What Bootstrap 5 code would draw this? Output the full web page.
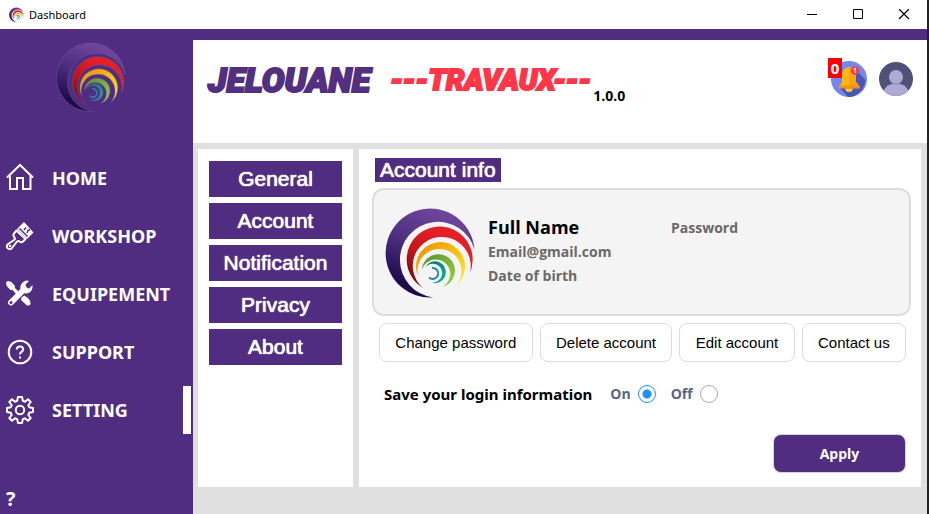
<!DOCTYPE html>
<html lang="en">
<head>
<meta charset="utf-8">
<meta name="viewport" content="width=device-width, initial-scale=1">
<title>Dashboard</title>
<link rel="stylesheet" href="https://cdn.jsdelivr.net/npm/bootstrap@5.3.0/dist/css/bootstrap.min.css">
<style>
:root{--brand:#512d82;--panel-gap:#e0e0e0}
body{font-family:"Open Sans","Noto Sans",sans-serif;background:#fff;border-right:2px solid #222;color:#000}
.title-bar{height:29px;padding-left:9px;gap:5px;font-family:"Noto Sans",sans-serif;font-size:11px;line-height:16px}
.title-bar .app-icon{width:15px;height:15px}
.win-btn{width:46px;height:29px;background:none;border:0;padding:0;display:grid;place-items:center}
.side{width:193px;background:var(--brand);padding:12px 0 3px}
.side .brand-logo{width:71px;height:71px;margin-left:56px}
.side-menu{margin-top:37px}
.side-link{height:58px;padding:0 2px 0 5px;gap:17px;color:#fff;text-decoration:none;font-family:"Noto Sans","Open Sans",sans-serif;font-size:18px;line-height:24px;font-weight:700}
.side-link svg{width:30px;height:30px;flex:none}
.side-link .active-bar{width:8px;height:48px;background:#fff}
.side-help{padding-left:6px;font-size:20px;line-height:24px;font-weight:700;color:#fff;text-decoration:none}
.work{border-top:11px solid var(--brand);background:var(--panel-gap)}
.top-head{background:#fff;height:103px;padding:17px 14px 0 15px}
.word-main,.word-sub{font-family:Roboto,"Liberation Sans",sans-serif;font-weight:900;font-style:italic;line-height:46px}
.word-main{color:#53307f;font-size:34px;-webkit-text-stroke:2px #53307f}
.word-sub{color:#ff3648;font-size:29px;margin-left:20px;-webkit-text-stroke:2px #ff3648}
.version{font-size:14px;line-height:20px;font-weight:700;margin:29px 0 0 2px}
.head-btn{border:0;background:none;padding:0;position:relative;line-height:0}
.count{position:absolute;left:-3px;top:-3px;width:14px;height:20px;background:#f00;color:#fff;font-size:15px;line-height:20px;font-weight:700;text-align:center}
.panels{padding:6px 6px 27px 5px;gap:6px}
.tabs-col{width:155px;background:#fff;padding:12px 11px;gap:6px}
.arial{font-family:"Liberation Sans",Arial,sans-serif}
.tab-btn{background:var(--brand);color:#fff;border:0;height:36px;font-size:21px;line-height:24px;padding:0;text-shadow:0 0 1px #fff,0 0 1px #fff}
.info-col{background:#fff;padding:9px 10px 14px 13px}
.info-title{background:var(--brand);color:#fff;font-size:21px;line-height:24px;font-weight:400;margin:0 3px 6px;padding:0 5px;text-shadow:0 0 1px #fff,0 0 1px #fff}
.profile{background:#f4f4f4;border:2px solid #dcdcdc;border-radius:12px;height:128px;padding:0 11px}
.profile .user-logo{width:92px;height:92px}
.user-name{font-size:18px;line-height:26px;font-weight:700;margin:0}
.user-line{font-size:14px;line-height:24px;font-weight:700;color:#6b6868}
.user-cols{padding-left:11px;margin-top:-2px}
.user-cols .data-col{width:183px}
.user-cols .pass-col{padding-top:2px}
.actions{gap:7px;margin-top:7px;padding:0 5px 0 7px}
.action-btn{background:#fff;border:1px solid #dcdcdc;border-radius:8px;height:39px;font-size:15px;line-height:20px;color:#000;padding:0}
.save-row{margin:20px 0 0 12px;font-size:15px;line-height:24px;font-weight:700}
.save-row fieldset{display:contents}
.save-row legend{font-family:"Noto Sans","Open Sans",sans-serif;font-size:15px;line-height:24px;font-weight:700;width:auto;margin:0 18px 0 0;float:none}
.save-row label{color:#5a6585;margin-right:7px;font-size:14px}
.save-row input{appearance:none;width:18px;height:18px;margin:0 15px 0 0;border:1px solid #a9a9a9;border-radius:50%;background:#fff}
.save-row input:checked{border-color:#1e90ff;background:radial-gradient(circle,#1e90ff 0 4px,#fff 5px)}
.apply-btn{background:var(--brand);color:#fff;border:1px solid #d8d4e0;border-radius:8px;width:133px;height:39px;font-size:14px;line-height:20px;font-weight:700;margin-right:5px;padding:0}
</style>
<script src="https://cdn.jsdelivr.net/npm/bootstrap@5.3.0/dist/js/bootstrap.bundle.min.js"></script>
</head>
<body class="min-vh-100 d-flex flex-column">
<svg width="0" height="0" class="position-absolute" aria-hidden="true">
  <defs>
    <linearGradient id="gPurple" x1="0.7" y1="0" x2="0.3" y2="1"><stop offset="0.1" stop-color="#6c4499"/><stop offset="0.5" stop-color="#4a2c7c"/><stop offset="0.9" stop-color="#1f0a4c"/></linearGradient>
    <linearGradient id="gRed" x1="0.8" y1="0.1" x2="0.1" y2="1"><stop offset="0.2" stop-color="#e41f26"/><stop offset="0.6" stop-color="#c01418"/><stop offset="1" stop-color="#6c0a0c"/></linearGradient>
    <linearGradient id="gYellow" x1="0" y1="0" x2="1" y2="1"><stop offset="0.2" stop-color="#eea00c"/><stop offset="0.9" stop-color="#ffe61a"/></linearGradient>
    <linearGradient id="gGreen" x1="0" y1="0" x2="1" y2="1"><stop offset="0.1" stop-color="#5d9a2e"/><stop offset="1" stop-color="#9bcf45"/></linearGradient>
    <linearGradient id="gTeal" x1="0" y1="0" x2="1" y2="1"><stop offset="0.1" stop-color="#0c7560"/><stop offset="1" stop-color="#12b5a2"/></linearGradient>
    <symbol id="swirl" viewBox="5 6.500 92 92">
      <path fill="url(#gPurple)" d="M53 98A44.500 44.500 0 1 1 94.500 50A38 38 0 1 0 53 98Z"/>
      <path fill="url(#gRed)" d="M43 88.500A33 33 0 1 1 90 73A29 29 0 1 0 43 88.500Z"/>
      <path fill="url(#gYellow)" d="M38.500 78A24.500 24.500 0 1 1 76 86A22 22 0 1 0 38.500 78Z"/>
      <path fill="url(#gGreen)" d="M42 70A16.500 16.500 0 1 1 63 87A14.500 14.500 0 1 0 42 70Z"/>
      <path fill="url(#gTeal)" d="M45 68A11 11 0 1 1 51 83A9.500 9.500 0 1 0 45 68Z"/>
      <path fill="none" stroke="#2a86b8" stroke-width="2" d="M52 68.500A5.500 5.500 0 1 1 49 78"/>
    </symbol>
  </defs>
</svg>

<header class="title-bar d-flex align-items-center">
  <svg class="app-icon" aria-hidden="true"><use href="#swirl"/></svg>
  <span>Dashboard</span>
  <div class="d-flex ms-auto">
    <button class="win-btn" aria-label="Minimize"><svg width="12" height="12" viewBox="0 0 12 12"><path d="M1 5.500h10" stroke="#000"/></svg></button>
    <button class="win-btn" aria-label="Maximize"><svg width="12" height="12" viewBox="0 0 12 12"><path d="M1.500 0.500h9v9h-9z" fill="none" stroke="#000"/></svg></button>
    <button class="win-btn" aria-label="Close"><svg width="12" height="12" viewBox="0 0 12 12"><path d="M1 0l10 10M11 0L1 10" stroke="#000" stroke-width="1.200"/></svg></button>
  </div>
</header>

<div class="d-flex flex-grow-1">
  <nav class="side d-flex flex-column flex-shrink-0">
    <svg class="brand-logo" stroke="#7d62a6" stroke-width="0.500" aria-hidden="true"><use href="#swirl"/></svg>
    <div class="side-menu d-flex flex-column">
      <a class="side-link d-flex align-items-center" href="#">
        <svg viewBox="0 0 30 30" fill="none" stroke="#fff" stroke-width="2" aria-hidden="true"><path d="M2 14.500L15 2L28 14.500"/><path d="M5 12.500V26H12V15H18V26H25.500V12.500"/></svg>HOME</a>
      <a class="side-link d-flex align-items-center" href="#">
        <svg viewBox="0 0 30 30" aria-hidden="true"><path fill="none" stroke="#fff" stroke-width="2" stroke-linejoin="round" d="M11.500 9.500L9 12.500Q7.500 14.500 9.500 16.500Q10.500 18 9 19L2.500 23.500Q1 26 3 27.500Q5.500 29 7 27L12 20.500Q13.500 19.500 14.500 20.500Q16.500 22 18 20.500L20.500 18Z"/><path fill="#fff" d="M12 8L19 1L28.500 11.500L22 18Z"/><path stroke="#512d82" stroke-width="1.500" fill="none" d="M14.500 7.500L22.500 15.500M19 9L21 6.500M22 12L23 9.500L25 8.500"/><circle cx="5" cy="25" r="1.300" fill="#fff"/></svg>WORKSHOP</a>
      <a class="side-link d-flex align-items-center" href="#">
        <svg viewBox="0 0 30 30" aria-hidden="true"><path fill="#fff" d="M1 4Q1 2.500 3 2L6.500 3L10 7L10 9L14 13L11.500 15.500L7.500 11L5.500 11L2 7.500Z"/><path fill="#fff" d="M16.500 18.500L19.500 16.500Q21.500 18 23 19Q26 22 25.500 25Q24.500 27 22 26.500L16 21Z"/><path stroke="#fff" stroke-width="6" stroke-linecap="round" d="M6 23.500L19.500 10"/><path fill="#fff" d="M15.500 11Q14.500 5 19 2.500Q21.500 1 24 2L20.500 5.500L21 9L24 9.500L27.500 6Q28 12 23.500 14Q20.500 15 18 13.500Z"/><circle cx="6" cy="23.500" r="1.500" fill="#512d82"/></svg>EQUIPEMENT</a>
      <a class="side-link d-flex align-items-center" href="#">
        <svg viewBox="0 0 30 30" fill="none" stroke="#fff" stroke-width="2" aria-hidden="true"><circle cx="15" cy="15" r="11.300"/><path d="M11.800 12.500Q11.800 9.500 15 9.500T18.200 12.300Q18.200 13.800 16.500 14.800Q15 15.800 15 17.500"/><path d="M15 19.500V21.500"/></svg>SUPPORT</a>
      <a class="side-link d-flex align-items-center" href="#" aria-current="page">
        <svg viewBox="0 0 30 30" fill="none" stroke="#fff" stroke-width="2" stroke-linejoin="round" aria-hidden="true"><circle cx="15" cy="15" r="4.200"/><path d="M13 2H17L17.800 5.800L20 6.700L23 4.300L25.700 7L23.300 10L24.200 12.200L28 13V17L24.200 17.800L23.300 20L25.700 23L23 25.700L20 23.300L17.800 24.200L17 28H13L12.200 24.200L10 23.300L7 25.700L4.300 23L6.700 20L5.800 17.800L2 17V13L5.800 12.200L6.700 10L4.300 7L7 4.300L10 6.700L12.200 5.800Z"/></svg>SETTING<span class="active-bar ms-auto"></span></a>
    </div>
    <a class="side-help mt-auto" href="#" aria-label="Help">?</a>
  </nav>

  <main class="work flex-grow-1 d-flex flex-column">
    <div class="top-head d-flex align-items-start">
      <span class="word-main">JELOUANE</span>
      <span class="word-sub">---TRAVAUX---</span>
      <span class="version">1.0.0</span>
      <div class="d-flex ms-auto mt-1 gap-2 align-items-center">
        <button class="head-btn me-1" aria-label="Notifications">
          <svg width="36" height="36" viewBox="0 0 36 36" aria-hidden="true"><circle cx="18" cy="18" r="18" fill="#7487ef"/><path fill="#4a56b5" d="M24 8L34.500 19A18 18 0 0 1 17 36L9 27Z"/><path fill="#fdb813" d="M8 26L11 21V13Q12 7 18 6Q24 7 25 13V21L29 26Z"/><path fill="#f9a114" d="M18 6Q24 7 25 13V21L29 26H18Z"/><path fill="#f7900f" d="M8 24.500H28L29 27.500H8Z"/><path fill="#ffc928" d="M14 27.500H22Q21.500 31 18 31T14 27.500Z"/><circle cx="24" cy="9.500" r="4.300" fill="#f0404d"/><path stroke="#fff" stroke-width="1.200" fill="none" d="M22.800 8.500L24.300 7.500V12"/></svg>
          <span class="count">0</span>
        </button>
        <button class="head-btn" aria-label="Profile">
          <svg width="34" height="34" viewBox="0 0 34 34" aria-hidden="true"><circle cx="17" cy="17" r="17" fill="#515078"/><path fill="#adaad4" d="M4.500 28.500Q8 21.500 17 21.500T29.500 28.500Q24 34 17 34T4.500 28.500Z"/><circle cx="17" cy="15" r="7" fill="#adaad4"/><path d="M12 20Q17 24 22 20" stroke="#9592c0" fill="none"/></svg>
        </button>
      </div>
    </div>

    <div class="panels d-flex flex-grow-1">
      <div class="tabs-col arial d-flex flex-column flex-shrink-0">
        <button class="tab-btn">General</button>
        <button class="tab-btn">Account</button>
        <button class="tab-btn">Notification</button>
        <button class="tab-btn">Privacy</button>
        <button class="tab-btn">About</button>
      </div>
      <section class="info-col flex-grow-1 d-flex flex-column">
        <h1 class="info-title arial align-self-start">Account info</h1>
        <div class="profile d-flex align-items-center">
          <svg class="user-logo flex-shrink-0" aria-hidden="true"><use href="#swirl"/></svg>
          <div class="user-cols d-flex">
            <div class="data-col">
              <h2 class="user-name">Full Name</h2>
              <div class="user-line">Email@gmail.com</div>
              <div class="user-line">Date of birth</div>
            </div>
            <div class="user-line pass-col">Password</div>
          </div>
        </div>
        <div class="actions arial d-flex">
          <button class="action-btn flex-fill">Change password</button>
          <button class="action-btn flex-fill">Delete account</button>
          <button class="action-btn flex-fill">Edit account</button>
          <button class="action-btn flex-fill">Contact us</button>
        </div>
        <form class="save-row d-flex align-items-center">
          <fieldset>
            <legend>Save your login information</legend>
            <label for="saveOn">On</label><input type="radio" name="save" id="saveOn" checked>
            <label for="saveOff">Off</label><input type="radio" name="save" id="saveOff">
          </fieldset>
        </form>
        <button class="apply-btn mt-auto align-self-end">Apply</button>
      </section>
    </div>
  </main>
</div>
</body>
</html>
